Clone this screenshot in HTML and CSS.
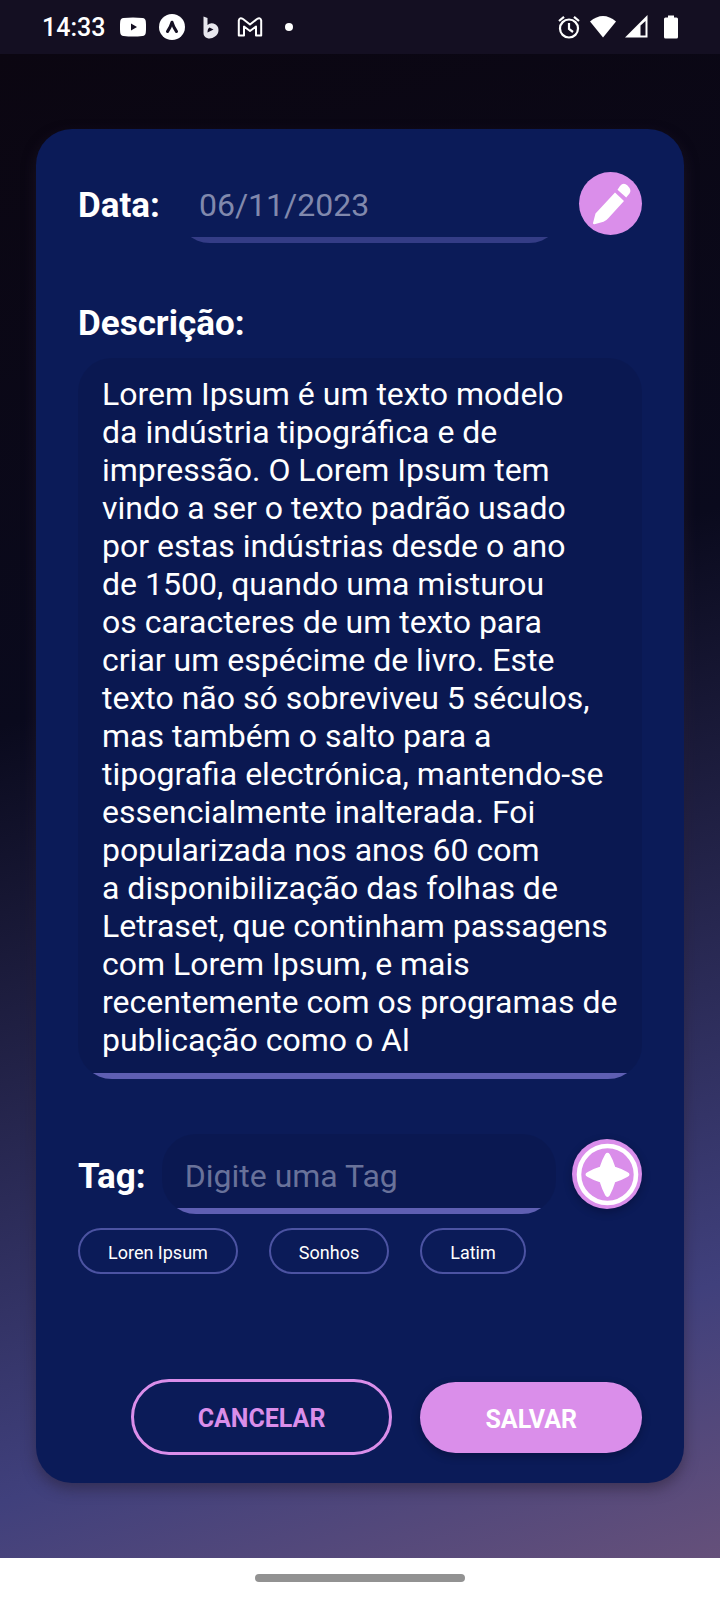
FILE: index.html
```html
<!DOCTYPE html>
<html lang="pt">
<head>
<meta charset="utf-8">
<meta name="viewport" content="width=device-width, initial-scale=1">
<title>Editar</title>
<link rel="stylesheet" href="styles.css">
</head>
<body>
<header class="status">
  <div class="status-group">
    <time class="clock">14:33</time>
    <svg width="26" height="26" viewBox="0 0 26 26"><path fill="#fff" fill-rule="evenodd" d="M3.500 4Q13 2.800 22.500 4 25.500 4.300 25.800 7.500 26.300 13 25.800 18.500 25.500 21.700 22.500 22 13 23.200 3.500 22 .500 21.700 .200 18.500 -.300 13 .200 7.500 .500 4.300 3.500 4ZM11 9.500V16.500L17 13Z"/></svg>
    <svg width="26" height="26" viewBox="0 0 26 26"><circle cx="13" cy="13" r="13" fill="#fff"/><path d="M8.500 17.500Q11.500 13.500 13 8.200 14.500 13.500 17.500 17.500" fill="none" stroke="#140f22" stroke-width="3" stroke-linecap="round" stroke-linejoin="round"/></svg>
    <svg width="26" height="26" viewBox="0 0 26 26"><path fill="#e8e7ee" fill-rule="evenodd" d="M5.500 2.500 9.500 4V11Q12 8.500 15.500 9.500 20.500 11 20.500 16 20.500 20 17 22.500 13 25.500 9 24 5.500 22.500 5.500 19ZM9.500 18.500 15.500 15.500 11.500 13.500Q9.500 14.500 9.500 18.500Z"/></svg>
    <svg width="26" height="26" viewBox="0 0 26 26"><path d="M1.800 21.500V6.500Q2.500 3 6 5L13 10.500 20 5Q23.500 3 24.200 6.500V21.500H19V12.500L13 17 7 12.500V21.500Z" fill="none" stroke="#fff" stroke-width="2" stroke-linejoin="round"/></svg>
    <svg width="26" height="26" viewBox="0 0 26 26"><circle cx="13" cy="13" r="4" fill="#fff"/></svg>
  </div>
  <div class="status-group status-right">
    <svg width="24" height="26" viewBox="0 0 24 26"><g fill="none" stroke="#fff" stroke-width="2.200"><circle cx="12" cy="14.500" r="9"/><path d="M12 9V15L16 18M2 7 7 2.800M22 7 17 2.800"/></g></svg>
    <svg width="26" height="26" viewBox="0 0 26 26"><path d="M0 7.500Q13-3.500 26 7.500L13 23.500Z" fill="#fff"/></svg>
    <svg width="24" height="26" viewBox="0 0 24 26"><path fill="#fff" fill-rule="evenodd" d="M0 23.500 22.500 1V23.500ZM15.500 11.500V21.500H20.500V7Z"/></svg>
    <svg width="26" height="26" viewBox="0 0 26 26"><path fill="#fff" d="M10 1.500H16V3.500H18.500Q20 3.500 20 5V23Q20 24.500 18.500 24.500H7.500Q6 24.500 6 23V5Q6 3.500 7.500 3.500H10Z"/></svg>
  </div>
</header>
<main class="screen">
  <form class="card">
    <div class="row">
      <label class="label" for="data">Data:</label>
      <input class="field field-plain" id="data" type="text" value="06/11/2023" disabled>
      <button class="round round-edit" type="button" aria-label="Editar data">
        <svg width="63" height="63" viewBox="0 0 63 63"><path fill="#fff" d="M36 20.500 45 29 29.500 46Q27.500 48.500 24.500 49.800L15.500 52.200Q14 52.500 14 51L16.500 41.500ZM38.500 17.800 41 14Q44.500 10 48.500 13.500 53 18 50.500 21.500L47.200 25.500Z"/></svg>
      </button>
    </div>
    <label class="label label-block" for="desc">Descrição:</label>
    <textarea class="field area" id="desc" rows="18" wrap="off" spellcheck="false">Lorem Ipsum é um texto modelo
da indústria tipográfica e de
impressão. O Lorem Ipsum tem
vindo a ser o texto padrão usado
por estas indústrias desde o ano
de 1500, quando uma misturou
os caracteres de um texto para
criar um espécime de livro. Este
texto não só sobreviveu 5 séculos,
mas também o salto para a
tipografia electrónica, mantendo-se
essencialmente inalterada. Foi
popularizada nos anos 60 com
a disponibilização das folhas de
Letraset, que continham passagens
com Lorem Ipsum, e mais
recentemente com os programas de
publicação como o Al</textarea>
    <div class="row">
      <label class="label" for="tag">Tag:</label>
      <input class="field" id="tag" type="text" placeholder="Digite uma Tag">
      <button class="round round-add" type="button" aria-label="Adicionar tag">
        <svg width="70" height="70" viewBox="0 0 70 70"><circle cx="35.500" cy="35.500" r="28.500" fill="none" stroke="#fff" stroke-width="4.600"/><path fill="#fff" stroke="#fff" stroke-width="3" stroke-linejoin="round" d="M34.500 16Q35.500 14.500 36.500 16Q39.500 21 42 29Q50 31.500 55 34.500 57 35.500 55 36.500 50 39.500 42 42 39.500 50 36.500 55.500 35.500 57.500 34.500 55.500 31.500 50 29 42 21 39.500 16 36.500 14 35.500 16 34.500 21 31.500 29 29 31.500 21 34.500 16Z"/></svg>
      </button>
    </div>
    <div class="chips">
      <button class="chip" type="button">Loren Ipsum</button>
      <button class="chip" type="button">Sonhos</button>
      <button class="chip" type="button">Latim</button>
    </div>
    <div class="actions">
      <button class="btn btn-outline" type="button">CANCELAR</button>
      <button class="btn btn-solid" type="submit">SALVAR</button>
    </div>
  </form>
</main>
<footer class="navbar"><div class="handle"></div></footer>
</body>
</html>
```
FILE: styles.css
```css
* { box-sizing: border-box; }
body {
  margin: 0;
  min-height: 100vh;
  display: flex;
  flex-direction: column;
  font-family: Roboto, sans-serif;
  color: #fff;
  background: #fff;
}
button, input, textarea { font-family: inherit; margin: 0; }
svg { display: block; }
.status {
  height: 54px;
  padding: 0 36px 0 42px;
  display: flex;
  align-items: center;
  justify-content: space-between;
  background: #140f22;
}
.status-group { display: flex; align-items: center; gap: 13px; }
.status-right { gap: 9px; }
.clock { padding-top: 2px; margin-right: 2px; font-size: 25px; font-weight: 500; line-height: 30px; }
.screen {
  flex: 1;
  padding: 75px 36px;
  background: linear-gradient(163deg, #0b0611 0%, #0a0a1d 39%, #40407c 84%, #65507a 100%);
}
.card {
  padding: 34px 42px 28px;
  border-radius: 36px;
  background: #0b1b58;
  box-shadow: 0 6px 14px rgba(40, 30, 50, 0.5);
}
.row { display: flex; align-items: center; gap: 16px; }
.label { font-size: 35px; font-weight: 700; line-height: 42px; }
.row .label { padding-top: 5px; }
.label-block { display: block; margin: 60px 0 13px; }
.field {
  flex: 1;
  min-width: 0;
  height: 80px;
  padding: 4px 23px 0;
  border: 0;
  border-radius: 34px;
  outline: 0;
  color: #fff;
  font-size: 32px;
  line-height: 38px;
  background: linear-gradient(#5f5fb3, #5f5fb3) bottom / 100% 6px no-repeat #0a1851;
}
.field::placeholder { color: #69729a; opacity: 1; }
.field-plain {
  color: #8189ad;
  background: linear-gradient(#343c86, #343c86) bottom / 100% 6px no-repeat;
}
.area {
  display: block;
  width: 100%;
  height: auto;
  margin-bottom: 55px;
  padding: 17px 20px 20px 24px;
  resize: none;
  overflow: hidden;
}
.round {
  flex: none;
  padding: 0;
  border: 0;
  border-radius: 50%;
  background: #da8eea;
}
.round-add { box-shadow: 0 3px 8px rgba(0, 0, 20, 0.3); }
.chips { display: flex; gap: 31px; margin-top: 14px; }
.chip {
  height: 46px;
  padding: 4px 28px 0;
  border: 2px solid #4c53a2;
  border-radius: 23px;
  background: none;
  color: #fff;
  font-size: 18px;
  line-height: 22px;
}
.actions {
  display: flex;
  justify-content: flex-end;
  align-items: center;
  gap: 28px;
  margin-top: 105px;
}
.btn { font-size: 25px; font-weight: 700; line-height: 30px; }
.btn-outline {
  padding: 22px 64px 18px;
  border: 3px solid #da8eea;
  border-radius: 38px;
  background: none;
  color: #da8eea;
}
.btn-solid {
  padding: 23px 65px 18px;
  border: 0;
  border-radius: 36px;
  background: #da8eea;
  color: #fff;
  box-shadow: 0 3px 8px rgba(0, 0, 20, 0.3);
}
.navbar {
  height: 42px;
  display: flex;
  justify-content: center;
  align-items: center;
  padding-bottom: 2px;
  background: #fff;
}
.handle { width: 210px; height: 8px; border-radius: 4px; background: #929292; }
```
